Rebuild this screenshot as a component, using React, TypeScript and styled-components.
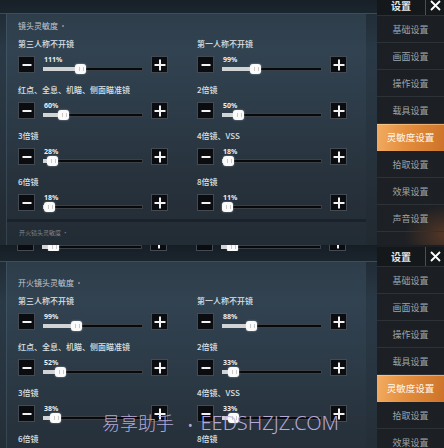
import React from "react";
import styled, { createGlobalStyle } from "styled-components";

const GlobalStyle = createGlobalStyle`
  html, body { margin: 0; padding: 0; background: #15191d; }
  body {
    width: 444px; height: 448px; overflow: hidden;
    font-family: "Noto Sans CJK SC", "Noto Sans", sans-serif;
  }
  * { box-sizing: border-box; }
`;

type Cell = { label: string; value: number };
type Section = { title: string; rows: Cell[][] };

const SECTION_1: Section = {
  title: "镜头灵敏度",
  rows: [
    [{ label: "第三人称不开镜", value: 111 }, { label: "第一人称不开镜", value: 99 }],
    [{ label: "红点、全息、机瞄、侧面瞄准镜", value: 60 }, { label: "2倍镜", value: 50 }],
    [{ label: "3倍镜", value: 28 }, { label: "4倍镜、VSS", value: 18 }],
    [{ label: "6倍镜", value: 18 }, { label: "8倍镜", value: 11 }],
  ],
};

const SECTION_2: Section = {
  title: "开火镜头灵敏度",
  rows: [
    [{ label: "第三人称不开镜", value: 99 }, { label: "第一人称不开镜", value: 88 }],
    [{ label: "红点、全息、机瞄、侧面瞄准镜", value: 52 }, { label: "2倍镜", value: 33 }],
    [{ label: "3倍镜", value: 38 }, { label: "4倍镜、VSS", value: 33 }],
    [{ label: "6倍镜", value: 18 }, { label: "8倍镜", value: 11 }],
  ],
};

const MENU = ["基础设置", "画面设置", "操作设置", "载具设置", "灵敏度设置", "拾取设置", "效果设置", "声音设置"];
const ACTIVE = "灵敏度设置";

/* ---------- page ---------- */
const Page = styled.div`
  position: relative;
  width: 444px;
  height: 448px;
  overflow: hidden;
  display: flex;
  flex-direction: column;
`;

const Viewport = styled.div<{ $h: number }>`
  height: ${(p) => p.$h}px;
  flex-shrink: 0;
  overflow: hidden;
`;

const ScreenRow = styled.div<{ $scroll: number }>`
  display: flex;
  height: 470px;
  margin-top: ${(p) => -p.$scroll}px;
`;

/* ---------- main area ---------- */
const Main = styled.div`
  flex: 1;
  min-width: 0;
  display: flex;
  flex-direction: column;
  background: linear-gradient(180deg, #1c2730 0%, #2a3946 12%, #27343f 30%, #222a32 50%, #1d2127 75%, #1b1e23 100%);
`;

const TopStrip = styled.div<{ $h: number }>`
  height: ${(p) => p.$h}px;
  flex-shrink: 0;
  background: linear-gradient(180deg, #161e25 0%, #1b252e 100%);
  border-bottom: 1px solid #3a4d5c;
  overflow: hidden;
  padding-left: 17px;
`;

const Panel = styled.div<{ $pad: number }>`
  flex: 1;
  margin: 0 11px 0 6px;
  padding: ${(p) => p.$pad}px 0 0 11px;
  background: linear-gradient(180deg, rgba(70, 92, 110, 0.35) 0%, rgba(45, 58, 70, 0.25) 35%, rgba(25, 30, 36, 0.15) 100%);
  border-left: 1px solid rgba(120, 145, 165, 0.22);
`;

const Title = styled.div`
  display: flex;
  align-items: center;
  gap: 4px;
  height: 10px;
  font-size: 8px;
  line-height: 10px;
  color: #c3cad0;
  white-space: nowrap;
  &::after {
    content: "";
    width: 2px;
    height: 2px;
    border-radius: 50%;
    background: #8b959d;
  }
`;

const Grid = styled.div`
  display: grid;
  grid-template-columns: 179px 150px;
  row-gap: 11px;
  margin-top: 7px;
`;

const CellBox = styled.div`
  display: flex;
  flex-direction: column;
  gap: 6px;
`;

const Label = styled.div`
  height: 12px;
  font-size: 8px;
  line-height: 12px;
  font-weight: 500;
  color: #dde1e5;
  white-space: nowrap;
`;

const Controls = styled.div`
  display: flex;
  align-items: center;
  gap: 8px;
  height: 17px;
`;

const Btn = styled.div<{ $plus?: boolean }>`
  position: relative;
  width: 17px;
  height: 17px;
  flex-shrink: 0;
  background: #0a0c0f;
  border: 1px solid #434a51;
  &::before {
    content: "";
    position: absolute;
    left: 50%;
    top: 50%;
    width: ${(p) => (p.$plus ? 11 : 9)}px;
    height: 2px;
    transform: translate(-50%, -50%);
    background: #f2f2f2;
  }
  &::after {
    content: "";
    display: ${(p) => (p.$plus ? "block" : "none")};
    position: absolute;
    left: 50%;
    top: 50%;
    width: 2px;
    height: 11px;
    transform: translate(-50%, -50%);
    background: #f2f2f2;
  }
`;

const Slider = styled.div`
  width: 100px;
  height: 17px;
  display: flex;
  flex-direction: column;
`;

const Pct = styled.div`
  height: 8px;
  padding-left: 1px;
  font-family: "Noto Sans", "Liberation Sans", sans-serif;
  font-size: 7px;
  line-height: 8px;
  font-weight: 700;
  color: #eceeef;
`;

const TrackWrap = styled.div`
  position: relative;
  height: 9px;
`;

const Track = styled.div`
  margin-top: 3px;
  height: 4px;
  background: #07090b;
  border: 1px solid #3b4046;
`;

const Fill = styled.div`
  position: absolute;
  left: 0;
  top: 3px;
  height: 4px;
  background: #d2d3d4;
`;

const Thumb = styled.div`
  position: absolute;
  top: 0;
  width: 11px;
  height: 10px;
  border-radius: 3px;
  background: #fbfbfb;
  box-shadow: 0 0 2px rgba(255, 255, 255, 0.5);
  &::after {
    content: "";
    position: absolute;
    left: 4px;
    top: 3px;
    width: 3px;
    height: 4px;
    border-left: 1px solid #c9c9c9;
    border-right: 1px solid #c9c9c9;
  }
`;

const Tail = styled.div`
  margin-top: 8px;
  margin-left: -11px;
  padding: 6px 0 0 12px;
  border-top: 3px solid rgba(10, 12, 15, 0.45);
  height: 18px;
  font-size: 6px;
  line-height: 9px;
  color: #9aa2aa;
  opacity: 0.75;
  white-space: nowrap;
`;

const PeekRow = styled.div`
  display: grid;
  grid-template-columns: 179px 150px;
  height: 6px;
  overflow: hidden;
  align-items: end;
`;

const PeekCell = styled.div`
  display: flex;
  align-items: flex-end;
  height: 6px;
`;

/* ---------- sidebar ---------- */
const Sidebar = styled.div<{ $top: number }>`
  width: 67px;
  flex-shrink: 0;
  display: flex;
  flex-direction: column;
  padding-top: ${(p) => p.$top}px;
  background:
    radial-gradient(ellipse 40px 30px at 100% 240px, rgba(150, 82, 40, 0.45), transparent),
    linear-gradient(180deg, #1b1f23 0%, #1d2024 60%, #231f1d 100%);
`;

const Header = styled.div`
  height: 20px;
  flex-shrink: 0;
  display: flex;
  background: #15181b;
  border-bottom: 1px solid #2c3035;
`;

const HeaderTitle = styled.div`
  width: 49px;
  flex-shrink: 0;
  display: flex;
  align-items: center;
  justify-content: center;
  font-size: 10px;
  line-height: 12px;
  font-weight: 700;
  color: #e3e5e7;
  border-right: 1px solid #4a4f55;
`;

const Close = styled.div`
  flex: 1;
  display: flex;
  align-items: center;
  justify-content: center;
  & > svg {
    display: block;
    flex-shrink: 0;
  }
`;

const Item = styled.div<{ $active?: boolean }>`
  height: 27px;
  flex-shrink: 0;
  display: flex;
  align-items: center;
  justify-content: center;
  font-size: ${(p) => (p.$active ? 9.5 : 9)}px;
  color: ${(p) => (p.$active ? "#fff8ef" : "#9fa5ab")};
  border-bottom: 1px solid ${(p) => (p.$active ? "transparent" : "#2d3237")};
  background: ${(p) =>
    p.$active
      ? "linear-gradient(100deg, #f3ad62 0%, #e38d3d 45%, #cc7329 100%)"
      : "transparent"};
  box-shadow: ${(p) => (p.$active ? "inset 0 1px 0 rgba(255,220,170,0.5)" : "none")};
`;

/* ---------- watermark ---------- */
const Watermark = styled.div`
  position: absolute;
  left: 102px;
  top: 409px;
  display: flex;
  align-items: baseline;
  color: rgba(196, 181, 230, 0.92);
  white-space: nowrap;
  pointer-events: none;
`;

const WmCn = styled.span`
  font-family: "Noto Sans CJK SC", sans-serif;
  font-size: 18px;
  font-weight: 300;
`;

const WmDot = styled.span`
  font-family: "Noto Sans", sans-serif;
  font-size: 12px;
  margin: 0 8px 0 14px;
`;

const WmEn = styled.span`
  font-family: "Noto Sans", sans-serif;
  font-size: 20px;
  font-weight: 300;
`;

/* ---------- components ---------- */
function SliderControl({ value }: { value: number }) {
  const center = Math.max(5.5, (value / 300) * 100);
  return (
    <Controls>
      <Btn />
      <Slider>
        <Pct>{value}%</Pct>
        <TrackWrap>
          <Track />
          <Fill style={{ width: `${center}px` }} />
          <Thumb style={{ left: `${center - 5.5}px` }} />
        </TrackWrap>
      </Slider>
      <Btn $plus />
    </Controls>
  );
}

function SectionBlock({ section }: { section: Section }) {
  return (
    <>
      <Title>{section.title}</Title>
      <Grid>
        {section.rows.flat().map((c, i) => (
          <CellBox key={i}>
            <Label>{c.label}</Label>
            <SliderControl value={c.value} />
          </CellBox>
        ))}
      </Grid>
    </>
  );
}

function SideMenu({ top }: { top: number }) {
  return (
    <Sidebar $top={top}>
      <Header>
        <HeaderTitle>设置</HeaderTitle>
        <Close>
          <svg width="11" height="11" viewBox="0 0 11 11">
            <path d="M1 1 L10 10 M10 1 L1 10" stroke="#ffffff" strokeWidth="1.8" />
          </svg>
        </Close>
      </Header>
      {MENU.map((m) => (
        <Item key={m} $active={m === ACTIVE}>
          {m}
        </Item>
      ))}
    </Sidebar>
  );
}

type ScreenProps = {
  section: Section;
  scroll: number;
  strip: number;
  pad: number;
  sideTop: number;
  peek?: boolean;
  tail?: string;
};

function Screen({ section, scroll, strip, pad, sideTop, peek, tail }: ScreenProps) {
  return (
    <ScreenRow $scroll={scroll}>
      <Main>
        <TopStrip $h={strip}>
          {peek && (
            <PeekRow>
              {[33, 33].map((v, i) => (
                <PeekCell key={i}>
                  <SliderControl value={v} />
                </PeekCell>
              ))}
            </PeekRow>
          )}
        </TopStrip>
        <Panel $pad={pad}>
          <SectionBlock section={section} />
          {tail && <Tail>{tail}</Tail>}
        </Panel>
      </Main>
      <SideMenu top={sideTop} />
    </ScreenRow>
  );
}

export default function App() {
  return (
    <>
      <GlobalStyle />
      <Page>
        <Viewport $h={245}>
          <Screen section={SECTION_1} scroll={5} strip={19} pad={7} sideTop={1} tail="开火镜头灵敏度 ·" />
        </Viewport>
        <Viewport $h={203}>
          <Screen section={SECTION_2} scroll={0} strip={17} pad={16} sideTop={2} peek />
        </Viewport>
        <Watermark>
          <WmCn>易享助手</WmCn>
          <WmDot>•</WmDot>
          <WmEn>EEDSHZJZ.COM</WmEn>
        </Watermark>
      </Page>
    </>
  );
}
